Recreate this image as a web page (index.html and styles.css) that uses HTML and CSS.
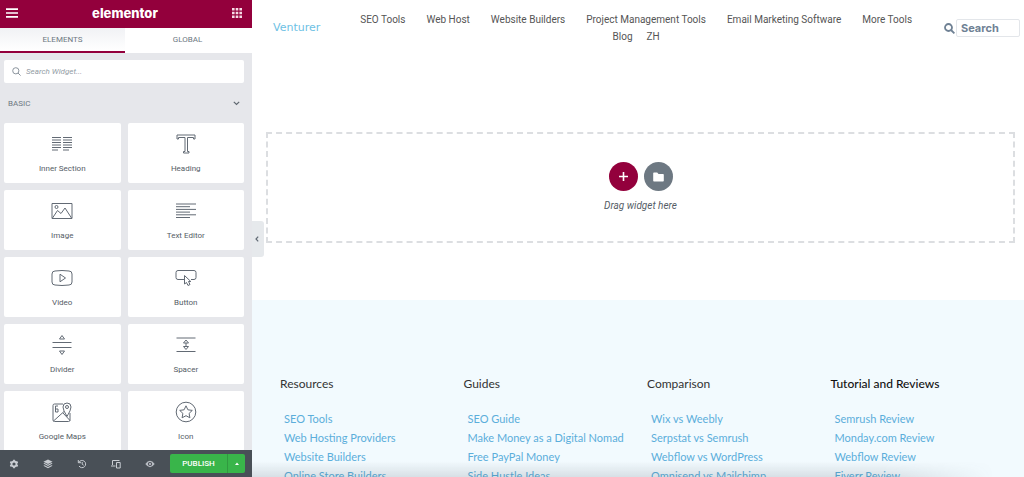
FILE: index.html
```html
<!DOCTYPE html>
<html lang="en">
<head>
<meta charset="utf-8">
<title>Elementor</title>
<link rel="stylesheet" href="styles.css">
</head>
<body>
<aside class="panel">
  <header class="panel-header">
    <button class="icon-btn" aria-label="Menu"><svg width="12" height="10" viewBox="0 0 12 10"><path d="M0 1.2h12M0 5h12M0 8.8h12" stroke="#fff" stroke-width="1.7"/></svg></button>
    <span class="brand">elementor</span>
    <button class="icon-btn" aria-label="Widgets"><svg width="10" height="10" viewBox="0 0 10 10" fill="#f6dce6"><path d="M0 0h2.6v2.6H0zM3.7 0h2.6v2.6H3.7zM7.4 0H10v2.6H7.4zM0 3.7h2.6v2.6H0zM3.7 3.7h2.6v2.6H3.7zM7.4 3.7H10v2.6H7.4zM0 7.4h2.6V10H0zM3.7 7.4h2.6V10H3.7zM7.4 7.4H10V10H7.4z"/></svg></button>
  </header>
  <div class="tabs">
    <button class="tab active">ELEMENTS</button>
    <button class="tab">GLOBAL</button>
  </div>
  <div class="panel-body">
    <label class="widget-search">
      <svg width="9" height="9" viewBox="0 0 9 9" fill="none" stroke="#8b949d"><circle cx="3.8" cy="3.8" r="3.1"/><path d="M6 6l2.6 2.6"/></svg>
      <input type="search" placeholder="Search Widget..." aria-label="Search Widget">
    </label>
    <button class="category">BASIC
      <svg width="7" height="5" viewBox="0 0 7 5" fill="none" stroke="#5f6870" stroke-width="1.2"><path d="M.8 .8l2.7 2.7L6.200 .8"/></svg>
    </button>
    <div class="widgets">
      <button class="widget"><svg class="glyph" viewBox="0 0 22 22"><path d="M1 4.500h9M1 7h9M1 9.500h9M1 12h9M1 14.500h9M1 17h6M12 4.500h9M12 7h9M12 9.500h9M12 12h9M12 14.500h9M12 17h6"/></svg>Inner Section</button>
      <button class="widget"><svg class="glyph" viewBox="0 0 22 22"><path d="M2 2h18v4h-1.500V4.500H12.500V18.500H14V20H8.500v-1.500H10V4.500H3.500V6H2z"/></svg>Heading</button>
      <button class="widget"><svg class="glyph" viewBox="0 0 22 22"><path d="M1 3.500h20v15H1zM1.500 18l5-7.500 3.500 3 4-5.500L20.500 18"/><circle cx="5.500" cy="7" r="1.500"/></svg>Image</button>
      <button class="widget"><svg class="glyph" viewBox="0 0 22 22"><path d="M1 4h20M1 6.700h14M1 9.400h20M1 12.100h14M1 14.800h20M1 17.500h14"/></svg>Text Editor</button>
      <button class="widget"><svg class="glyph" viewBox="0 0 22 22"><path d="M4 4q7-1 14 0 3 0 3 3v8q0 3-3 3-7 1-14 0-3 0-3-3V7q0-3 3-3zM9 7.200v7.600l5.500-3.800z"/></svg>Video</button>
      <button class="widget"><svg class="glyph" viewBox="0 0 22 22"><path d="M9 12.500H3q-2 0-2-2V5.500q0-2 2-2h16q2 0 2 2v5q0 2-2 2h-3M9.500 8.500v8.500l2-1.500 1.500 3 2-1-1.500-3h2.300z"/></svg>Button</button>
      <button class="widget"><svg class="glyph" viewBox="0 0 22 22"><path d="M1.500 8.500h19M1.500 13.500h19M8.500 5L11 1.500 13.500 5zM8.500 17L11 20.500 13.500 17z"/></svg>Divider</button>
      <button class="widget"><svg class="glyph" viewBox="0 0 22 22"><path d="M1.500 4h19M1.500 17.500h19M8.500 9L11 6l2.500 3zM8.500 12.500L11 15.500l2.500-3zM11 9v3.500"/></svg>Spacer</button>
      <button class="widget"><svg class="glyph" viewBox="0 0 22 22"><path d="M12 3H3.500Q2 3 2 4.500V19q0 1.500 1.500 1.500h14q1.500 0 1.500-1.500V12M2.500 20L13 10.500M12 12l7 7.500M16 15.500q-4-6.500-4-9.500a4 4 0 0 1 8 0q0 3-4 9.500zM7 5H4.500v3H7v3H4.500V8"/><circle cx="16" cy="6" r="1.500"/></svg>Google Maps</button>
      <button class="widget"><svg class="glyph" viewBox="0 0 22 22"><circle cx="11" cy="11" r="9.800"/><path d="M11 4.800l1.900 4 4.400.6-3.200 3 .8 4.400-3.900-2.100-3.900 2.100.8-4.400-3.200-3 4.400-.6z"/></svg>Icon</button>
    </div>
  </div>
  <footer class="panel-footer">
    <div class="tools">
      <button aria-label="Settings"><svg width="10" height="10" viewBox="0 0 10 10" fill="none" stroke="#c9cdd2"><circle cx="5" cy="5" r="2.500" stroke-width="1.800"/><path d="M5 .7v1.500M5 7.800v1.500M1.300 2.900l1.200.7M7.500 6.400l1.200.7M1.300 7.100l1.200-.7M7.500 3.600l1.200-.7" stroke-width="1.800"/></svg></button>
      <button aria-label="Navigator"><svg width="10" height="10" viewBox="0 0 10 10" fill="#c9cdd2"><path d="M5 .5L9.600 2.700 5 4.900.4 2.700zM.4 4.500l1.200-.5L5 5.700 8.400 4l1.200.5L5 6.900zM.4 6.700l1.200-.5L5 7.900l3.400-1.700 1.200.5L5 9.200z"/></svg></button>
      <button aria-label="History"><svg width="10" height="10" viewBox="0 0 10 10" fill="none" stroke="#c9cdd2"><path d="M1.800 3.500A3.600 3.600 0 1 1 2 7M1.300 1v2.700H4M5.200 3v2.200l1.500 1"/></svg></button>
      <button aria-label="Responsive Mode"><svg width="10" height="10" viewBox="0 0 10 10" fill="none" stroke="#c9cdd2"><path d="M1.500 6V1.500h7M0 7h4.500M5.500 3.500h3.700V9H5.500z"/></svg></button>
      <button aria-label="Preview"><svg width="10" height="10" viewBox="0 0 10 10"><path d="M.3 5Q5-1.400 9.700 5 5 11.400.3 5z" fill="#b8bdc3"/><circle cx="5" cy="5" r="2.100" fill="#4a4e57"/><circle cx="5" cy="5" r="1" fill="#c9cdd2"/></svg></button>
    </div>
    <div class="publish">
      <button class="publish-main">PUBLISH</button>
      <button class="publish-more" aria-label="Save options"><svg width="4" height="3" viewBox="0 0 4 3"><path d="M0 3l2-2.500L4 3z" fill="#fff"/></svg></button>
    </div>
  </footer>
</aside>
<main class="preview">
  <button class="collapse" aria-label="Hide panel"><svg width="4" height="6" viewBox="0 0 4 6" fill="none" stroke="#626b75" stroke-width="1.200"><path d="M3.200.6L1 3l2.200 2.400"/></svg></button>
  <header class="site-header">
    <a class="site-name" href="#">Venturer</a>
    <nav class="site-nav">
      <div class="nav-row"><a href="#">SEO Tools</a><a href="#">Web Host</a><a href="#">Website Builders</a><a href="#">Project Management Tools</a><a href="#">Email Marketing Software</a><a href="#">More Tools</a></div>
      <div class="nav-row nav-row-short"><a href="#">Blog</a><a href="#">ZH</a></div>
    </nav>
    <label class="site-search">
      <svg width="11" height="11" viewBox="0 0 11 11" fill="none" stroke="#6f8194" stroke-width="1.800"><circle cx="4.500" cy="4.500" r="3.500"/><path d="M7 7l3.400 3.400"/></svg>
      <input type="text" placeholder="Search" aria-label="Search">
    </label>
  </header>
  <section class="drop-zone">
    <div class="drop-actions">
      <button class="round add" aria-label="Add section"><svg width="9" height="9" viewBox="0 0 9 9"><path d="M4.500 0v9M0 4.500h9" stroke="#fff" stroke-width="1.600"/></svg></button>
      <button class="round library" aria-label="Add template"><svg width="11" height="10" viewBox="0 0 11 10"><path d="M1 .5h3.200L5.500 2H10q.8 0 .8.800v6q0 .8-.8.800H1Q.2 9.600.2 8.800V1.300Q.2.500 1 .5z" fill="#fff"/></svg></button>
    </div>
    <p class="drop-text">Drag widget here</p>
  </section>
  <footer class="site-footer">
    <section><h2>Resources</h2><ul><li><a href="#">SEO Tools</a></li><li><a href="#">Web Hosting Providers</a></li><li><a href="#">Website Builders</a></li><li><a href="#">Online Store Builders</a></li></ul></section>
    <section><h2>Guides</h2><ul><li><a href="#">SEO Guide</a></li><li><a href="#">Make Money as a Digital Nomad</a></li><li><a href="#">Free PayPal Money</a></li><li><a href="#">Side Hustle Ideas</a></li></ul></section>
    <section><h2>Comparison</h2><ul><li><a href="#">Wix vs Weebly</a></li><li><a href="#">Serpstat vs Semrush</a></li><li><a href="#">Webflow vs WordPress</a></li><li><a href="#">Omnisend vs Mailchimp</a></li></ul></section>
    <section><h2 class="strong">Tutorial and Reviews</h2><ul><li><a href="#">Semrush Review</a></li><li><a href="#">Monday.com Review</a></li><li><a href="#">Webflow Review</a></li><li><a href="#">Fiverr Review</a></li></ul></section>
  </footer>
  <div class="shade"></div>
</main>
</body>
</html>
```

FILE: styles.css
```css
* { box-sizing: border-box; }
body {
  margin: 0;
  height: 100vh;
  display: flex;
  overflow: hidden;
  background: #fff;
  font-family: Roboto, sans-serif;
}
button, input { font: inherit; border: 0; padding: 0; margin: 0; background: none; color: inherit; }
a { color: inherit; text-decoration: none; }
svg { display: block; flex: none; }

.panel { width: 252px; flex: none; display: flex; flex-direction: column; background: #e6e7eb; font-size: 8px; color: #555d66; }
.panel-header { height: 28px; flex: none; display: flex; align-items: center; justify-content: space-between; padding: 0 10px 2px 6px; background: #93003c; }
.brand { font: 800 13px/16px Inter, sans-serif; color: #fff; }
.tabs { display: flex; height: 25px; flex: none; padding-right: 2px; background: #fff; }
.tab { flex: 1; color: #6d7882; padding-bottom: 1px; border-bottom: 2px solid transparent; }
.tab.active { background: linear-gradient(#f1f2f5, #fff); border-bottom-color: #93003c; }
.panel-body { flex: 1; min-height: 0; overflow: hidden; padding: 7px 8px 0 4px; }
.widget-search { display: flex; align-items: center; gap: 5px; height: 23px; padding: 0 8px; background: #fff; border-radius: 2px; }
.widget-search input { flex: 1; min-width: 0; font-style: italic; outline: 0; }
.widget-search input::placeholder { color: #939ca5; opacity: 1; }
.category { width: 100%; height: 40px; display: flex; align-items: center; justify-content: space-between; padding: 0 4px; color: #6d7882; }
.widgets { display: grid; grid-template-columns: 1fr 1fr; grid-auto-rows: 60px; gap: 7px; }
.widget { display: flex; flex-direction: column; align-items: center; gap: 9px; padding-top: 10px; line-height: 10px; background: #fff; border-radius: 2px; }
.glyph { width: 22px; height: 22px; fill: none; stroke: #626a74; stroke-width: 1; }
.panel-footer { height: 27px; flex: none; display: flex; align-items: center; justify-content: space-between; background: #495057; padding: 0 7px 0 9px; }
.tools { display: flex; gap: 24px; }
.publish { display: flex; height: 19px; border-radius: 2px; overflow: hidden; background: #39b54a; color: #fff; font-weight: 500; }
.publish-main { width: 57px; }
.publish-more { width: 18px; display: flex; align-items: center; justify-content: center; border-left: 1px solid #319a40; }

.preview { flex: 1; min-width: 0; position: relative; display: flex; flex-direction: column; overflow: hidden; }
.collapse { position: absolute; left: 0; top: 221px; width: 12px; height: 36px; padding-right: 2px; display: flex; align-items: center; justify-content: center; background: #e6e9ec; border-radius: 0 3px 3px 0; }
.site-header { display: flex; align-items: center; height: 56px; flex: none; padding: 0 4px 0 21px; }
.site-name { font: 11px/16px "DejaVu Sans", sans-serif; color: #6ec1e4; }
.site-nav { flex: 1; padding-left: 8px; font-size: 10px; line-height: 17px; color: #555; white-space: nowrap; }
.nav-row { display: flex; justify-content: center; gap: 21px; }
.nav-row-short { gap: 14px; }
.site-search { display: flex; align-items: center; gap: 1px; }
.site-search input { width: 64px; height: 18px; padding: 0 4px; border: 1px solid #e3e6ea; border-radius: 2px; font: 700 11px/16px Inter, sans-serif; outline: 0; }
.site-search input::placeholder { color: #6f8194; opacity: 1; }
.drop-zone { margin: 76px 9px 0 14px; height: 111px; flex: none; display: flex; flex-direction: column; align-items: center; padding-top: 28px; border: 2px dashed #dcdee1; }
.drop-actions { display: flex; gap: 6px; }
.round { width: 29px; height: 29px; border-radius: 50%; display: flex; align-items: center; justify-content: center; }
.add { background: #93003c; }
.library { background: #6d7882; }
.drop-text { margin: 9px 0 0; font-size: 10px; line-height: 12px; font-style: italic; color: #555d66; }
.site-footer { flex: 1 0 auto; display: grid; grid-template-columns: repeat(4, 1fr); margin-top: 57px; padding: 76px 10px 0 28px; background: #f2fafe; font-family: Lato, sans-serif; }
.site-footer h2 { margin: 0; font-size: 12px; line-height: 16px; font-weight: 400; color: #333; }
.site-footer h2.strong { font-weight: 500; color: #111; }
.site-footer ul { list-style: none; margin: 17px 0 0; padding: 0 0 0 4px; font-size: 11px; line-height: 19px; color: #5baedb; white-space: nowrap; }
.shade {
  position: absolute; left: 0; right: 30px; bottom: 0; height: 16px; pointer-events: none;
  background: linear-gradient(transparent, rgba(60, 70, 80, .14));
  -webkit-mask-image: linear-gradient(to right, #000 85%, transparent);
  mask-image: linear-gradient(to right, #000 85%, transparent);
}
```
